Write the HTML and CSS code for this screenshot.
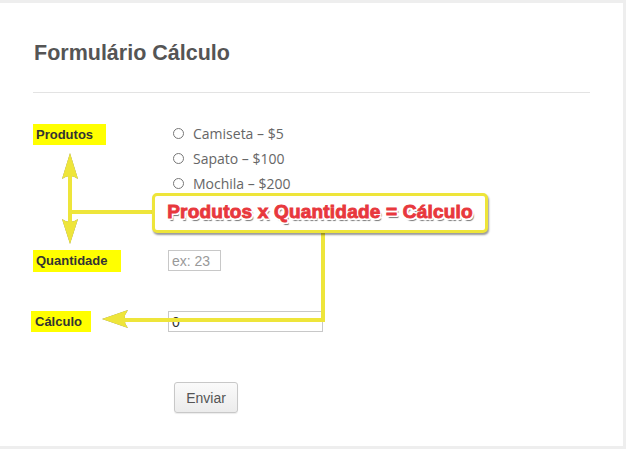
FILE: index.html
```html
<!DOCTYPE html>
<html lang="pt-BR">
<head>
    <meta charset="UTF-8">
    <meta name="viewport" content="width=device-width, initial-scale=1.0">
    <title>Formulário Cálculo</title>
    <link rel="stylesheet" href="styles.css">
</head>
<body>
    <div class="page">
        <div class="card">
            <h1 class="title">Formulário Cálculo</h1>
            <hr class="divider">

            <form class="calc-form">
                <div class="form-row row-produtos">
                    <span class="field-label">Produtos</span>
                    <div class="options">
                        <label class="option"><input type="radio" name="produto" value="5"> Camiseta – $5</label>
                        <label class="option"><input type="radio" name="produto" value="100"> Sapato – $100</label>
                        <label class="option"><input type="radio" name="produto" value="200"> Mochila – $200</label>
                    </div>
                </div>

                <div class="form-row row-quantidade">
                    <span class="field-label">Quantidade</span>
                    <input class="input input-qtd" type="text" placeholder="ex: 23">
                </div>

                <div class="form-row row-calculo">
                    <span class="field-label label-calculo">Cálculo</span>
                    <input class="input input-calc" type="text" value="0" readonly>
                </div>

                <div class="form-actions">
                    <button type="submit" class="btn">Enviar</button>
                </div>
            </form>
        </div>

        <!-- annotation arrows drawn over the form -->
        <svg class="arrows" width="626" height="449" viewBox="0 0 626 449">
            <g fill="none" stroke="#eee53a" stroke-width="4">
                <path d="M70 172 V226"/>
                <path d="M70 212 H154"/>
                <path d="M323 232 V320 H122"/>
            </g>
            <g fill="#eee53a">
                <path d="M70 153 L78 179 Q70 173 62 179 Z"/>
                <path d="M70 244 L78 219 Q70 225 62 219 Z"/>
                <path d="M102 319 L128 310 Q121 319 128 328 Z"/>
            </g>
        </svg>

        <div class="note">Produtos x Quantidade = Cálculo</div>
    </div>
</body>
</html>
```

FILE: styles.css
```css
body {
    margin: 0;
    background-color: #eeeeee;
    font-family: "Liberation Sans", Arial, sans-serif;
}

.page {
    position: relative;
    width: 626px;
    height: 449px;
    padding: 3px 3px 0 0;
    box-sizing: border-box;
}

.card {
    height: 443px;
    background: #fff;
    padding: 38px 33px 0 33px;
    box-sizing: border-box;
}

.title {
    margin: 0;
    font-size: 21.5px;
    line-height: 24px;
    font-weight: bold;
    color: #555;
    padding-left: 1px;
}

.divider {
    margin: 27px 0 0 0;
    border: none;
    border-top: 1px solid #e3e3e3;
    height: 0;
}

.calc-form {
    margin-top: 28px;
}

.form-row {
    display: grid;
    grid-template-columns: 135px 1fr;
    align-items: start;
}

.row-quantidade {
    margin-top: 54px;
}

.row-calculo {
    margin-top: 39px;
}

.field-label {
    justify-self: start;
    background: #ffff00;
    color: #333;
    font-size: 13px;
    font-weight: bold;
    line-height: 15px;
    padding: 3px 13px 3px 3px;
}

.row-produtos .field-label {
    margin-top: 3px;
}

.row-quantidade .field-label {
    padding-bottom: 4px;
}

.label-calculo {
    margin-left: -2px;
    padding-left: 4px;
    padding-right: 9px;
}

.options {
    display: flex;
    flex-direction: column;
}

.option {
    display: flex;
    align-items: center;
    height: 25px;
    font-family: "Open Sans", sans-serif;
    font-size: 14px;
    color: #666;
}

.option input {
    appearance: none;
    -webkit-appearance: none;
    width: 11px;
    height: 11px;
    margin: 0 9px 0 5px;
    border: 1px solid #777;
    border-radius: 50%;
    background: #fff;
}

.input {
    height: 21px;
    box-sizing: border-box;
    border: 1px solid #c8c8c8;
    padding: 0 3px;
    font-family: "Liberation Sans", Arial, sans-serif;
    font-size: 14px;
    color: #333;
    outline: none;
}

.input::placeholder {
    color: #999;
}

.input-qtd {
    width: 53px;
}

.input-calc {
    width: 155px;
}

.form-actions {
    margin-top: 50px;
    padding-left: 141px;
}

.btn {
    width: 64px;
    height: 31px;
    border: 1px solid #c8c8c8;
    border-radius: 3px;
    background: linear-gradient(#fafafa, #ececec);
    box-shadow: 0 1px 1px rgba(0, 0, 0, 0.08);
    font-family: "Liberation Sans", Arial, sans-serif;
    font-size: 14px;
    color: #555;
}

.arrows {
    position: absolute;
    left: 0;
    top: 0;
    filter: drop-shadow(0 0 0.6px rgba(90, 90, 60, 0.7));
}

.note {
    position: absolute;
    left: 152px;
    top: 193px;
    width: 336px;
    height: 40px;
    box-sizing: border-box;
    border: 3px solid #eee53a;
    border-radius: 5px;
    background: #fff;
    box-shadow: 1px 2px 2px rgba(0, 0, 0, 0.4);
    text-align: center;
    line-height: 32px;
    font-size: 19px;
    font-weight: bold;
    letter-spacing: 0.2px;
    color: #e8383d;
    -webkit-text-stroke: 0.9px #e8383d;
    text-shadow:
        -2px 0 0 #fff, 2px 0 0 #fff, 0 -2px 0 #fff, 0 2px 0 #fff,
        -1.5px -1.5px 0 #fff, 1.5px 1.5px 0 #fff, -1.5px 1.5px 0 #fff, 1.5px -1.5px 0 #fff,
        2px 2.5px 1px #777;
}
```
